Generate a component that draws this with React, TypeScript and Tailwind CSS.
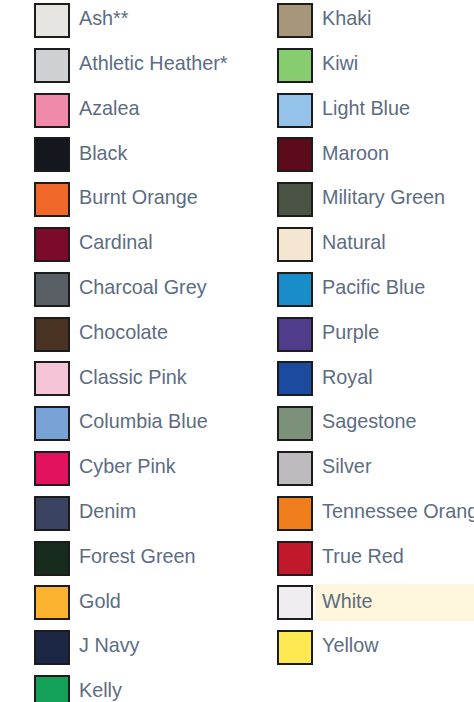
const LEFT: [string, string][] = [
  ['Ash**', '#e7e5e2'],
  ['Athletic Heather*', '#cfd0d4'],
  ['Azalea', '#f08aab'],
  ['Black', '#14171e'],
  ['Burnt Orange', '#f0692b'],
  ['Cardinal', '#7c0a2b'],
  ['Charcoal Grey', '#5a5f65'],
  ['Chocolate', '#493222'],
  ['Classic Pink', '#f5c4d7'],
  ['Columbia Blue', '#79a3d6'],
  ['Cyber Pink', '#e2125f'],
  ['Denim', '#3b4363'],
  ['Forest Green', '#182b1f'],
  ['Gold', '#fbb32f'],
  ['J Navy', '#1c2746'],
  ['Kelly', '#15a058'],
]

const RIGHT: [string, string][] = [
  ['Khaki', '#a8967a'],
  ['Kiwi', '#87cc6e'],
  ['Light Blue', '#95c2e8'],
  ['Maroon', '#5d0a1b'],
  ['Military Green', '#4a5344'],
  ['Natural', '#f5e6d1'],
  ['Pacific Blue', '#198dc9'],
  ['Purple', '#4f3c8b'],
  ['Royal', '#1b4a9f'],
  ['Sagestone', '#7c917a'],
  ['Silver', '#bdbbbe'],
  ['Tennessee Orange', '#f07e1c'],
  ['True Red', '#c0192b'],
  ['White', '#efedf0'],
  ['Yellow', '#fee953'],
]

function Row({ name, color }: { name: string; color: string }) {
  const selected = name === 'White'
  return (
    <div className="h-[44.8px] flex items-start">
      <span
        className="w-9 h-[35px] shrink-0 border-2 border-[#1c1c1c] mt-[3px]"
        style={{ backgroundColor: color }}
      />
      <span
        className={`h-[37px] mt-[2px] ml-[2px] flex-1 flex items-center pl-[7px] pb-[3px] whitespace-nowrap ${selected ? 'bg-[#fdf5dc]' : ''}`}
      >
        {name}
      </span>
    </div>
  )
}

export default function App() {
  return (
    <div className="w-[474px] h-[702px] overflow-hidden bg-white text-[#5c6c83] text-[19.8px] font-['Liberation_Sans',Arial,sans-serif]">
      <div className="grid grid-cols-[243px_1fr] pl-[34px]">
        <div className="flex flex-col">
          {LEFT.map(([n, c]) => (
            <Row key={n} name={n} color={c} />
          ))}
        </div>
        <div className="flex flex-col min-w-0 overflow-hidden">
          {RIGHT.map(([n, c]) => (
            <Row key={n} name={n} color={c} />
          ))}
        </div>
      </div>
    </div>
  )
}
